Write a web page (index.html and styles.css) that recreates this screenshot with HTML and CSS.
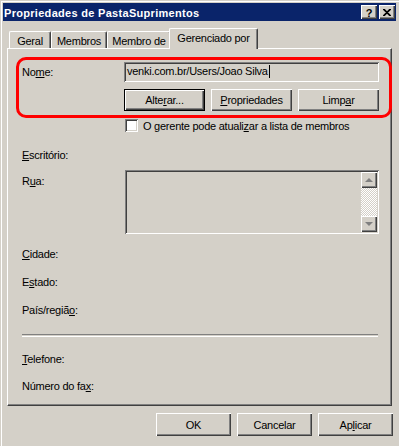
FILE: index.html
```html
<!DOCTYPE html>
<html lang="pt-BR">
<head>
  <meta charset="UTF-8">
  <title>Propriedades de PastaSuprimentos</title>
  <link rel="stylesheet" href="styles.css">
</head>
<body>

  <div class="janela">
    <div class="titulo">
      <span class="titulo-texto">Propriedades de PastaSuprimentos</span>
      <div class="titulo-botoes">
        <span class="cbtn cbtn-ajuda">?</span>
        <span class="cbtn">
          <svg width="8" height="7" viewBox="0 0 8 7"><path d="M0 0 L7 7 M1 0 L8 7 M7 0 L0 7 M8 0 L1 7" stroke="#000" stroke-width="1.1"/></svg>
        </span>
      </div>
    </div>

    <!-- abas -->
    <div class="abas">
      <div class="aba aba-geral">Geral</div>
      <div class="aba aba-membros">Membros</div>
      <div class="aba aba-membrode">Membro de</div>
      <div class="aba aba-ativa">Gerenciado por</div>
    </div>

    <div class="painel">
      <div class="destaque"></div>

      <div class="linha linha-nome">
        <span class="rotulo">No<u>m</u>e:</span>
        <div class="campo">venki.com.br/Users/Joao Silva<span class="cursor"></span></div>
      </div>

      <div class="linha linha-botoes">
        <span class="rotulo"></span>
        <div class="grupo-botoes">
          <button class="botao botao-padrao">Alte<u>r</u>ar...</button>
          <button class="botao"><u>P</u>ropriedades</button>
          <button class="botao">Limp<u>a</u>r</button>
        </div>
      </div>

      <div class="linha linha-check">
        <span class="rotulo"></span>
        <span class="checkbox"></span>
        <span class="check-texto">O gerente pode atuali<u>z</u>ar a lista de membros</span>
      </div>

      <div class="linha linha-texto l-escritorio"><span class="rotulo"><u>E</u>scritório:</span></div>

      <div class="linha linha-rua">
        <span class="rotulo rotulo-rua">R<u>u</u>a:</span>
        <div class="area">
          <div class="rolagem">
            <span class="seta seta-cima"></span>
            <span class="trilho"></span>
            <span class="seta seta-baixo"></span>
          </div>
        </div>
      </div>

      <div class="linha linha-texto l-cidade"><span class="rotulo"><u>C</u>idade:</span></div>
      <div class="linha linha-texto l-estado"><span class="rotulo">E<u>s</u>tado:</span></div>
      <div class="linha linha-texto l-pais"><span class="rotulo">País/regiã<u>o</u>:</span></div>

      <div class="separador"></div>

      <div class="linha linha-texto l-telefone"><span class="rotulo"><u>T</u>elefone:</span></div>
      <div class="linha linha-texto l-fax"><span class="rotulo">Número do fa<u>x</u>:</span></div>
    </div>

    <div class="rodape">
      <button class="botao botao-rodape">OK</button>
      <button class="botao botao-rodape">Cancelar</button>
      <button class="botao botao-rodape">Ap<u>l</u>icar</button>
    </div>
  </div>

</body>
</html>
```

FILE: styles.css
```css
body {
  margin: 0;
  padding: 0;
  background: #d4d0c8;
  font-family: "Liberation Sans", Arial, sans-serif;
  font-size: 11px;
  letter-spacing: -0.25px;
  color: #000;
}

.janela {
  width: 399px;
  height: 446px;
  box-sizing: border-box;
  padding: 3px 3px 0 3px;
  background: #d4d0c8;
  box-shadow: inset 1px 1px #d4d0c8, inset 2px 2px #fff;
  position: relative;
}

.titulo {
  height: 18px;
  background: #0a246a;
  display: flex;
  align-items: center;
  justify-content: space-between;
  padding: 0 1px 0 1px;
}

.titulo-texto {
  color: #fff;
  font-weight: bold;
  font-size: 11px;
  letter-spacing: 0.3px;
  margin-top: 1px;
}

.titulo-botoes {
  display: flex;
  gap: 2px;
}

.cbtn {
  width: 16px;
  height: 14px;
  background: #d4d0c8;
  box-shadow: inset 1px 1px #fff, inset -1px -1px #404040, inset -2px -2px #808080;
  display: flex;
  align-items: center;
  justify-content: center;
  font-weight: bold;
  font-size: 11px;
  letter-spacing: 0;
  box-sizing: border-box;
}

.cbtn-ajuda {
  padding-top: 1px;
}

/* abas */
.abas {
  display: flex;
  align-items: flex-end;
  height: 27px;
  padding-left: 6px;
  position: relative;
  z-index: 2;
}

.aba {
  height: 17px;
  box-sizing: border-box;
  padding-top: 3px;
  text-align: center;
  border-top: 1px solid #fff;
  border-left: 1px solid #fff;
  border-right: 1px solid #404040;
  border-radius: 2px 2px 0 0;
  box-shadow: inset -1px 0 #808080;
}

.aba-geral { width: 42px; }
.aba-membros { width: 56px; }
.aba-membrode { width: 64px; }

.aba-ativa {
  width: 89px;
  height: 21px;
  margin-left: -2px;
  margin-bottom: -1px;
  padding-top: 3px;
  background: #d4d0c8;
}

.painel {
  margin: 0 4px;
  height: 358px;
  box-sizing: border-box;
  border-top: 1px solid #fff;
  border-left: 1px solid #fff;
  border-right: 1px solid #404040;
  border-bottom: 1px solid #404040;
  box-shadow: inset -1px -1px #808080;
  padding: 0 0 0 14px;
  position: relative;
}

.destaque {
  position: absolute;
  left: 8px;
  top: 8px;
  width: 376px;
  height: 61px;
  box-sizing: border-box;
  border: 3px solid #f00;
  border-radius: 10px;
  z-index: 3;
}

.linha {
  display: flex;
  align-items: center;
}

.rotulo {
  width: 102px;
  flex-shrink: 0;
}

.linha-nome {
  margin-top: 13px;
  height: 20px;
}

.campo {
  width: 255px;
  height: 20px;
  box-sizing: border-box;
  padding: 3px 0 0 3px;
  box-shadow: inset 1px 1px #808080, inset -1px -1px #fff, inset 2px 2px #404040, inset -2px -2px #d4d0c8;
  display: flex;
  align-items: flex-start;
}

.cursor {
  display: inline-block;
  width: 1px;
  height: 13px;
  background: #000;
  margin-left: 1px;
}

.linha-botoes {
  margin-top: 7px;
  height: 22px;
}

.grupo-botoes {
  display: flex;
  gap: 6px;
}

.botao {
  width: 81px;
  height: 22px;
  background: #d4d0c8;
  border: none;
  font-family: "Liberation Sans", Arial, sans-serif;
  font-size: 11px;
  letter-spacing: -0.25px;
  color: #000;
  padding: 0;
  box-shadow: inset 1px 1px #fff, inset -1px -1px #404040, inset -2px -2px #808080;
}

.botao-padrao {
  box-shadow: inset 0 0 0 1px #000, inset 2px 2px #fff, inset -2px -2px #404040, inset -3px -3px #808080;
}

.linha-check {
  margin-top: 8px;
  height: 13px;
}

.checkbox {
  width: 13px;
  height: 13px;
  box-sizing: border-box;
  background: #fff;
  box-shadow: inset 1px 1px #808080, inset -1px -1px #fff, inset 2px 2px #404040, inset -2px -2px #d4d0c8;
  margin-left: 1px;
}

.check-texto {
  margin-left: 5px;
}

.linha-texto {
  height: 14px;
}

.l-escritorio { margin-top: 16px; }

.linha-rua {
  margin-top: 8px;
  height: 64px;
  align-items: flex-start;
}

.rotulo-rua {
  padding-top: 5px;
}

.area {
  width: 254px;
  height: 64px;
  margin-left: 1px;
  box-sizing: border-box;
  padding: 2px;
  box-shadow: inset 1px 1px #808080, inset -1px -1px #fff, inset 2px 2px #404040, inset -2px -2px #d4d0c8;
  display: flex;
  justify-content: flex-end;
}

.rolagem {
  width: 16px;
  display: flex;
  flex-direction: column;
}

.seta {
  width: 16px;
  height: 16px;
  background: #d4d0c8;
  box-shadow: inset 1px 1px #fff, inset -1px -1px #404040, inset -2px -2px #808080;
  display: flex;
  align-items: center;
  justify-content: center;
}

.seta::after {
  content: "";
  width: 0;
  height: 0;
  border-left: 4px solid transparent;
  border-right: 4px solid transparent;
}

.seta-cima::after {
  border-bottom: 4px solid #808080;
}

.seta-baixo::after {
  border-top: 4px solid #808080;
}

.trilho {
  flex: 1;
  background-color: #e8e6e2;
  background-image: repeating-conic-gradient(#fff 0 25%, #d4d0c8 0 50%);
  background-size: 2px 2px;
}

.l-cidade { margin-top: 13px; }
.l-estado { margin-top: 14px; }
.l-pais { margin-top: 14px; }

.separador {
  width: 356px;
  height: 1px;
  margin-top: 17px;
  border-top: 1px solid #808080;
  border-bottom: 1px solid #fff;
}

.l-telefone { margin-top: 15px; }
.l-fax { margin-top: 13px; }

.rodape {
  display: flex;
  justify-content: flex-end;
  gap: 6px;
  padding: 7px 3px 0 0;
}

.botao-rodape {
  width: 75px;
  height: 23px;
}
```
